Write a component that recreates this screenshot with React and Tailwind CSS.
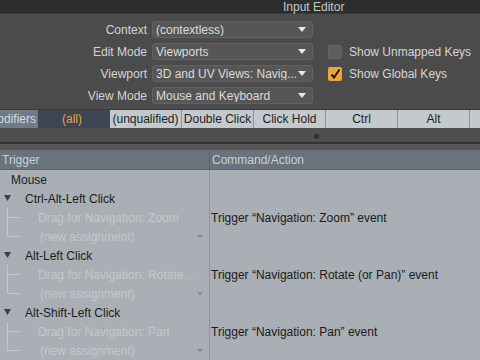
import React from "react";

const font = { fontFamily: '"Liberation Sans", Arial, sans-serif' };

function Dropdown({ text }) {
  return (
    <div className="h-[17px] w-[161px] rounded-[3px] bg-[#565656] border border-[#626262] flex items-center pl-[3px] pr-[6px] text-[12px] text-[#dcdcdc] leading-none">
      <span className="flex-1 truncate whitespace-nowrap">{text}</span>
      <svg width="8" height="5" viewBox="0 0 8 5"><path d="M0 0 L8 0 L4 5 Z" fill="#e8e8e8" /></svg>
    </div>
  );
}

function Check({ checked, label }) {
  return (
    <div className="flex items-center h-[17px] gap-[7px]">
      {checked ? (
        <div className="w-[14px] h-[14px] rounded-[2px] bg-[#f0a43a] flex items-center justify-center">
          <svg width="11" height="11" viewBox="0 0 11 11"><path d="M1.5 6.5 L4 9.5 L9.5 1.5" stroke="#1a1a1a" strokeWidth="2" fill="none" /></svg>
        </div>
      ) : (
        <div className="w-[14px] h-[14px] rounded-[2px] bg-[#5e5e5e] border border-[#666]" />
      )}
      <span className="text-[12px] text-[#d6d6d6] whitespace-nowrap">{label}</span>
    </div>
  );
}

function GroupRow({ label }) {
  return (
    <div className="h-[19px] flex items-center relative">
      <div className="w-[209px] flex items-center h-full relative">
        <svg className="absolute left-[4px] top-[6px]" width="7" height="6" viewBox="0 0 7 6"><path d="M0 0 L7 0 L3.5 6 Z" fill="#3a3f44" /></svg>
        <span className="ml-[25px] text-[12px] text-[#1c1c1c] whitespace-nowrap">{label}</span>
      </div>
    </div>
  );
}

function ChildRow({ label, cmd, last, isNew }) {
  return (
    <div className="h-[19px] flex items-center">
      <div className="w-[209px] h-full flex items-center relative">
        <div className={"absolute left-[7px] top-0 w-px bg-[#c6cacf] " + (last ? "h-[10px]" : "h-full")} />
        <div className="absolute left-[7px] top-[9px] w-[7px] h-px bg-[#c6cacf]" />
        <div className="absolute left-[15px] top-[9px] w-[4px] h-px bg-[#c6cacf]" />
        <span className={"text-[12px] text-[#c4c8cc] whitespace-nowrap " + (isNew ? "ml-[40px]" : "ml-[38px]")}>{label}</span>
        {isNew && (
          <svg className="absolute left-[197px] top-[8px]" width="6" height="4" viewBox="0 0 6 4"><path d="M0 0 L6 0 L3 4 Z" fill="#8a8f94" /></svg>
        )}
      </div>
      <div className="w-px h-full bg-[#8e959b]" />
      <span className="ml-[1px] text-[12px] text-[#1a1a1a] whitespace-nowrap">{cmd}</span>
    </div>
  );
}

export default function App() {
  const tabs = ["(unqualified)", "Double Click", "Click Hold", "Ctrl", "Alt"];
  const groups = [
    { g: "Ctrl-Alt-Left Click", d: "Drag for Navigation: Zoom", c: "Trigger \u201cNavigation: Zoom\u201d event" },
    { g: "Alt-Left Click", d: "Drag for Navigation: Rotate ...", c: "Trigger \u201cNavigation: Rotate (or Pan)\u201d event" },
    { g: "Alt-Shift-Left Click", d: "Drag for Navigation: Pan", c: "Trigger \u201cNavigation: Pan\u201d event" },
  ];
  return (
    <div className="w-[480px] h-[360px] overflow-hidden bg-[#4a4a4a] flex flex-col" style={font}>
      {/* title */}
      <div className="h-[14px] bg-[#2d2d2d] flex items-center pl-[283px] border-b border-[#3a3a3a]">
        <span className="text-[12px] text-[#c8c8c8] leading-none">Input Editor</span>
      </div>
      {/* form */}
      <div className="h-[96px] bg-[#4b4b4b] flex pt-[7px] border-b border-[#3a3a3a]">
        <div className="flex flex-col gap-[5px] w-[147px] items-end">
          {["Context", "Edit Mode", "Viewport", "View Mode"].map((l) => (
            <div key={l} className="h-[17px] flex items-center text-[12px] text-[#d4d4d4] whitespace-nowrap">{l}</div>
          ))}
        </div>
        <div className="flex flex-col gap-[5px] ml-[5px]">
          <Dropdown text="(contextless)" />
          <Dropdown text="Viewports" />
          <Dropdown text="3D and UV Views: Navig..." />
          <Dropdown text="Mouse and Keyboard" />
        </div>
        <div className="flex flex-col gap-[5px] ml-[15px] pt-[22px]">
          <Check label="Show Unmapped Keys" />
          <Check checked label="Show Global Keys" />
        </div>
      </div>
      {/* tabs */}
      <div className="h-[18px] flex text-[12px] leading-none">
        <div className="w-[38px] bg-[#6f7b87] flex items-center justify-end overflow-hidden pr-[2px]">
          <span className="text-[#d2d9e0] whitespace-nowrap">Modifiers</span>
        </div>
        <div className="w-[72px] bg-[#3c4652] flex items-center justify-center">
          <span className="text-[#e6a23a] ml-[-4px]">(all)</span>
        </div>
        {tabs.map((t) => (
          <div key={t} className="w-[72px] bg-[#c4c9ce] border-r border-[#8d9399] flex items-center justify-center text-[#222] whitespace-nowrap">{t}</div>
        ))}
        <div className="flex-1 bg-[#c4c9ce]" />
      </div>
      {/* splitter */}
      <div className="h-[14px] bg-[#4f4f4f] relative">
        <div className="absolute left-[314px] top-[6px] w-[5px] h-[5px] rounded-full bg-[#2e2e2e]" />
      </div>
      <div className="h-[2px] bg-[#333]" />
      <div className="h-[6px] bg-[#575757]" />
      {/* header */}
      <div className="h-[20px] bg-[#68737e] flex text-[12px] text-[#c9d0d6] border-b border-[#5c666f]">
        <div className="w-[209px] flex items-center pl-[2px]">Trigger</div>
        <div className="w-px bg-[#59636d]" />
        <div className="flex items-center pl-[2px]">Command/Action</div>
      </div>
      {/* tree */}
      <div className="flex-1 bg-[#a9afb4] relative">
        <div className="absolute left-[209px] top-0 bottom-0 w-px bg-[#8e959b]" />
        <div className="h-[19px] flex items-center">
          <span className="ml-[11px] text-[12px] text-[#1c1c1c]">Mouse</span>
        </div>
        {groups.map((g) => (
          <div key={g.g}>
            <GroupRow label={g.g} />
            <ChildRow label={g.d} cmd={g.c} />
            <ChildRow label="(new assignment)" cmd="" last isNew />
          </div>
        ))}
      </div>
    </div>
  );
}
